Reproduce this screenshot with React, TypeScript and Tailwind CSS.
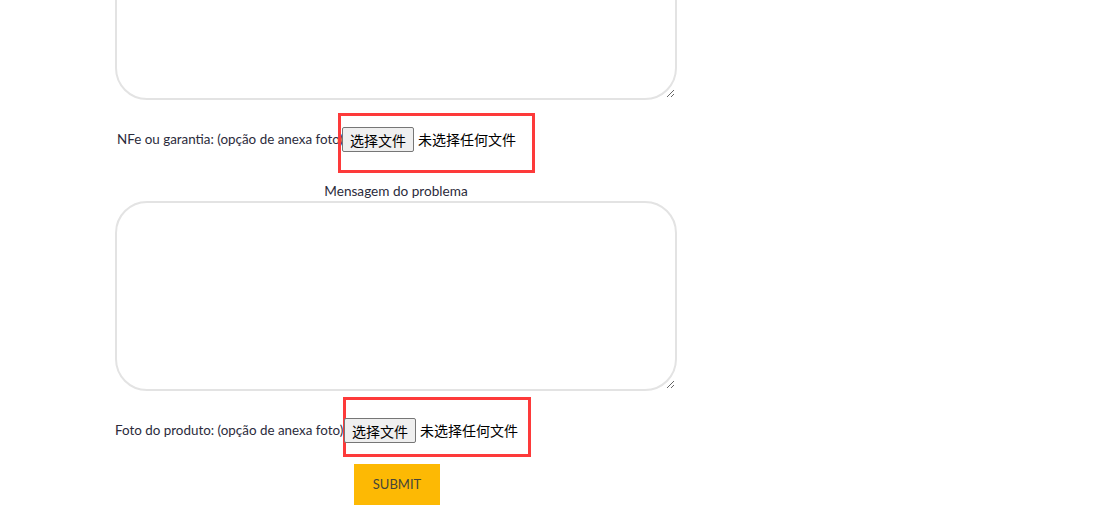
import React from "react";

function FileField({ label, labelWidth, boxClass }: { label: string; labelWidth: string; boxClass: string }) {
  return (
    <div className="relative flex items-center h-[25px]">
      <span className={`${labelWidth} shrink-0 whitespace-nowrap overflow-visible text-[13.4px] text-[#2b2b3b]`}>{label}</span>
      <div className="relative z-10 flex items-center">
        <button className="h-[25px] px-[7px] border border-[#767676] rounded-[2px] bg-[#efefef] text-[14px] leading-none text-black" style={{ fontFamily: '"Noto Sans CJK SC", sans-serif' }}>
          选择文件
        </button>
        <span className="ml-[4px] text-[14px] text-black" style={{ fontFamily: '"Noto Sans CJK SC", sans-serif' }}>未选择任何文件</span>
      </div>
      <div className={`absolute border-[3px] border-[#fd3a3a] pointer-events-none ${boxClass}`} />
    </div>
  );
}

export default function App() {
  return (
    <div className="w-[1095px] h-[523px] overflow-hidden bg-white" style={{ fontFamily: 'Lato, "Noto Sans CJK SC", sans-serif' }}>
      <div className="ml-[115px] w-[562px] flex flex-col">
        <textarea className="block w-[562px] h-[200px] -mt-[100px] rounded-[32px] border-2 border-[#e3e3e3] outline-none" />
        <div className="mt-[27px] pl-[2px]">
          <FileField label="NFe ou garantia: (opção de anexa foto)" labelWidth="w-[225px]" boxClass="left-[221px] -top-[14px] w-[197px] h-[60px]" />
        </div>
        <div className="mt-[29px] text-center text-[13.6px] leading-[20px] text-[#2b2b3b]">Mensagem do problema</div>
        <textarea className="block w-[562px] h-[190px] mt-[0px] rounded-[32px] border-2 border-[#e3e3e3] outline-none" />
        <div className="mt-[27px]">
          <FileField label="Foto do produto: (opção de anexa foto)" labelWidth="w-[229px]" boxClass="left-[228px] -top-[21px] w-[188px] h-[60px]" />
        </div>
        <div className="flex justify-center mt-[21px] pl-[2px]">
          <button className="w-[86px] h-[41px] bg-[#fdb904] text-[13px] text-[#45453a] uppercase">Submit</button>
        </div>
      </div>
    </div>
  );
}
